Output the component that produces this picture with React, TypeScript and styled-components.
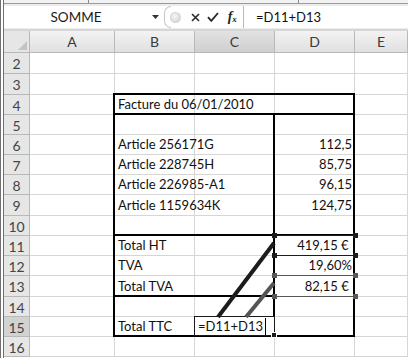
import styled, { createGlobalStyle } from "styled-components";

const GlobalStyle = createGlobalStyle`
  html, body {
    margin: 0;
    padding: 0;
    background: #fff;
  }
  body {
    font-family: "Lato", "Liberation Sans", sans-serif;
    overflow: hidden;
  }
`;

type Edges = { t?: boolean; r?: boolean; b?: boolean; l?: boolean };
type CellSpec = {
  text?: string;
  align?: "left" | "right";
  edges?: Edges;
  ref?: "dark" | "gray";
  active?: boolean;
};

const columns = [
  { key: "A", width: 85 },
  { key: "B", width: 80 },
  { key: "C", width: 80 },
  { key: "D", width: 80 },
  { key: "E", width: 53 },
];

const rows = [
  { n: 2, h: 21 },
  { n: 3, h: 21 },
  { n: 4, h: 20 },
  { n: 5, h: 20 },
  { n: 6, h: 20 },
  { n: 7, h: 20 },
  { n: 8, h: 20 },
  { n: 9, h: 21 },
  { n: 10, h: 20 },
  { n: 11, h: 20 },
  { n: 12, h: 20 },
  { n: 13, h: 21 },
  { n: 14, h: 20 },
  { n: 15, h: 20 },
  { n: 16, h: 20 },
];

const cells: Record<string, CellSpec> = {
  B4: { text: "Facture du 06/01/2010", edges: { t: true, l: true, b: true } },
  C4: { edges: { t: true, b: true } },
  D4: { edges: { t: true, r: true, b: true } },
  B6: { text: "Article 256171G" },
  D6: { text: "112,5", align: "right" },
  B7: { text: "Article 228745H" },
  D7: { text: "85,75", align: "right" },
  B8: { text: "Article 226985-A1" },
  D8: { text: "96,15", align: "right" },
  B9: { text: "Article 1159634K" },
  D9: { text: "124,75", align: "right" },
  B10: { edges: { b: true } },
  C10: { edges: { b: true } },
  D10: { edges: { b: true } },
  B11: { text: "Total HT" },
  D11: { text: "419,15 € ", align: "right", ref: "dark" },
  B12: { text: "TVA" },
  D12: { text: "19,60%", align: "right" },
  B13: { text: "Total TVA", edges: { b: true } },
  C13: { edges: { b: true } },
  D13: { text: "82,15 € ", align: "right", ref: "gray" },
  B15: { text: "Total TTC", edges: { b: true } },
  C15: { text: "=D11+D13", active: true, edges: { b: true } },
  D15: { edges: { b: true } },
};

// bordure gauche de B et bordures gauche/droite de D sur le tableau
for (let n = 5; n <= 15; n++) {
  const b = (cells[`B${n}`] = cells[`B${n}`] || {});
  b.edges = { ...b.edges, l: true };
  const d = (cells[`D${n}`] = cells[`D${n}`] || {});
  d.edges = { ...d.edges, r: true, l: n < 15 };
}

const refColor = { dark: "#1c1c1c", gray: "#575757" };

export default function App() {
  return (
    <Window>
      <GlobalStyle />
      <RibbonEdge>
        <RibbonSep style={{ left: 84 }} />
        <RibbonSep style={{ left: 294 }} />
      </RibbonEdge>

      <FormulaBar>
        <NameBox>SOMME</NameBox>
        <DropArrow>
          <svg width="7" height="4" viewBox="0 0 7 4">
            <path d="M0 0h7L3.5 4z" fill="#333" />
          </svg>
        </DropArrow>
        <ButtonGroup>
          <RoundCap />
          <Dot />
          <BarIcon>
            <svg width="9" height="9" viewBox="0 0 9 9">
              <path d="M1 1l7 7M8 1L1 8" stroke="#2a2a2a" strokeWidth="1.6" />
            </svg>
          </BarIcon>
          <BarIcon>
            <svg width="12" height="10" viewBox="0 0 12 10">
              <path
                d="M1 5.2l3.3 3.6L11 1"
                fill="none"
                stroke="#2a2a2a"
                strokeWidth="1.9"
              />
            </svg>
          </BarIcon>
          <FxIcon>
            f<sub>x</sub>
          </FxIcon>
        </ButtonGroup>
        <FormulaInput>=D11+D13</FormulaInput>
      </FormulaBar>

      <Sheet>
        <CornerCell>
          <svg width="9" height="9" viewBox="0 0 9 9">
            <path d="M9 0v9H0z" fill="#c4c4c4" />
          </svg>
        </CornerCell>
        {columns.map((c) => (
          <ColHeader key={c.key} $selected={c.key === "C"}>
            {c.key}
          </ColHeader>
        ))}

        {rows.map((r) => (
          <Row key={r.n} r={r} />
        ))}

        <Arrows width="408" height="358" viewBox="0 0 408 358">
          <line
            x1="218"
            y1="317"
            x2="274"
            y2="243"
            stroke="#1c1c1c"
            strokeWidth="4"
          />
          <line
            x1="246"
            y1="317"
            x2="274"
            y2="283"
            stroke="#555"
            strokeWidth="4"
          />
        </Arrows>
      </Sheet>
    </Window>
  );
}

function Row({ r }: { r: { n: number; h: number } }) {
  return (
    <>
      <RowHeader $h={r.h} $selected={r.n === 15}>
        {r.n}
      </RowHeader>
      {columns.map((c) => {
        const spec = cells[`${c.key}${r.n}`] || {};
        const e = spec.edges || {};
        const color = spec.ref ? refColor[spec.ref] : "";
        return (
          <Cell key={c.key} $h={r.h} $align={spec.align || "left"}>
            {spec.text && <CellText>{spec.text}</CellText>}
            {spec.active && <Caret />}
            {e.t && <Edge $side="t" />}
            {e.b && <Edge $side="b" />}
            {e.l && <Edge $side="l" />}
            {e.r && <Edge $side="r" />}
            {spec.ref && (
              <RefBox $color={color}>
                <Handle $color={color} $pos="tl" />
                <Handle $color={color} $pos="tr" />
                <Handle $color={color} $pos="bl" />
                <Handle $color={color} $pos="br" />
              </RefBox>
            )}
            {spec.active && (
              <ActiveBox>
                <FillHandle />
              </ActiveBox>
            )}
          </Cell>
        );
      })}
    </>
  );
}

const Window = styled.div`
  position: relative;
  width: 408px;
  height: 358px;
  overflow: hidden;
  box-sizing: border-box;
  border-left: 4px double #707070;
  background: #fff;
`;

const RibbonEdge = styled.div`
  position: relative;
  height: 3px;
  background: #f2f2f2;
  border-bottom: 1px solid #9a9a9a;
`;

const RibbonSep = styled.div`
  position: absolute;
  top: 0;
  width: 1px;
  height: 3px;
  background: #8a8a8a;
`;

const FormulaBar = styled.div`
  display: flex;
  align-items: stretch;
  height: 22px;
  padding: 2px 0 1px;
  background: #ececec;
  border-bottom: 2px solid #d6d6d6;
`;

const NameBox = styled.div`
  width: 144px;
  display: flex;
  align-items: center;
  justify-content: center;
  background: #fff;
  color: #1a1a1a;
  font-size: 13.5px;
`;

const DropArrow = styled.div`
  width: 14px;
  display: flex;
  align-items: center;
  justify-content: center;
  background: #fff;
`;

const ButtonGroup = styled.div`
  display: flex;
  align-items: center;
  width: 81px;
  background: #fff;
  border-right: 1px solid #b9b9b9;
`;

const RoundCap = styled.div`
  width: 6px;
  height: 20px;
  margin-left: 2px;
  border: 1px solid #c6c6c6;
  border-right: none;
  border-radius: 10px 0 0 10px;
`;

const Dot = styled.div`
  width: 9px;
  height: 9px;
  margin-left: -1px;
  margin-right: 6px;
  border-radius: 50%;
  background: radial-gradient(circle at 40% 35%, #f6f6f6, #cfcfcf);
  border: 1px solid #d4d4d4;
`;

const BarIcon = styled.div`
  width: 18px;
  display: flex;
  align-items: center;
  justify-content: center;
`;

const FxIcon = styled.div`
  width: 22px;
  text-align: center;
  font-family: "Liberation Serif", serif;
  font-style: italic;
  font-weight: bold;
  font-size: 14px;
  color: #222;
  line-height: 1;

  sub {
    font-size: 9px;
    vertical-align: -1px;
  }
`;

const FormulaInput = styled.div`
  flex: 1;
  display: flex;
  align-items: center;
  padding-left: 12px;
  background: #fff;
  color: #111;
  font-size: 13px;
`;

const Sheet = styled.div`
  display: grid;
  grid-template-columns: 26px 85px 80px 80px 80px 53px;
  grid-auto-rows: auto;
`;

const HeaderBase = styled.div`
  box-sizing: border-box;
  display: flex;
  align-items: center;
  justify-content: center;
  color: #3a3a3a;
  font-size: 14px;
  border-right: 1px solid #b8b8b8;
  border-bottom: 1px solid #b8b8b8;
`;

const CornerCell = styled(HeaderBase)`
  height: 22px;
  align-items: flex-end;
  justify-content: flex-end;
  padding: 0 2px 2px 0;
  background: #e6e6e6;
`;

const ColHeader = styled(HeaderBase)<{ $selected?: boolean }>`
  height: 22px;
  background: ${(p) =>
    p.$selected
      ? "linear-gradient(#e2e2e2, #cfcfcf)"
      : "linear-gradient(#f3f3f3, #e0e0e0)"};
`;

const RowHeader = styled(HeaderBase)<{ $h: number; $selected?: boolean }>`
  height: ${(p) => p.$h}px;
  padding-top: 1px;
  background: ${(p) => (p.$selected ? "#d2d2d2" : "#e6e6e6")};
  color: #444;
`;

const Cell = styled.div<{ $h: number; $align: "left" | "right" }>`
  position: relative;
  box-sizing: border-box;
  height: ${(p) => p.$h}px;
  display: flex;
  align-items: flex-end;
  justify-content: ${(p) => (p.$align === "right" ? "flex-end" : "flex-start")};
  padding: 0 2px 1px 3px;
  border-right: 1px solid #d6d6d6;
  border-bottom: 1px solid #d6d6d6;
  color: #111;
  font-size: 13px;
  white-space: pre;
  overflow: visible;
`;

const CellText = styled.span`
  position: relative;
  z-index: 2;
  line-height: 17px;
`;

const Caret = styled.span`
  position: relative;
  z-index: 2;
  width: 1px;
  height: 17px;
  margin-left: 2px;
  background: #000;
`;

const Edge = styled.span<{ $side: "t" | "r" | "b" | "l" }>`
  position: absolute;
  z-index: 3;
  background: #000;
  ${(p) =>
    p.$side === "t"
      ? "top: -2px; left: -2px; right: -1px; height: 2px;"
      : p.$side === "b"
      ? "bottom: -1px; left: -2px; right: -1px; height: 2px;"
      : p.$side === "l"
      ? "left: -2px; top: -2px; bottom: -1px; width: 2px;"
      : "right: -1px; top: -2px; bottom: -1px; width: 2px;"}
`;

const RefBox = styled.span<{ $color: string }>`
  position: absolute;
  z-index: 4;
  top: -1px;
  left: 0;
  right: -1px;
  bottom: -1px;
  border-top: 1px solid ${(p) => p.$color};
  border-bottom: 1px solid ${(p) => p.$color};
`;

const Handle = styled.span<{ $color: string; $pos: string }>`
  position: absolute;
  width: 5px;
  height: 5px;
  background: ${(p) => p.$color};
  ${(p) => (p.$pos[0] === "t" ? "top: -3px;" : "bottom: -3px;")}
  ${(p) => (p.$pos[1] === "l" ? "left: -3px;" : "right: -3px;")}
`;

const ActiveBox = styled.span`
  position: absolute;
  z-index: 4;
  top: -1px;
  left: -1px;
  right: -1px;
  bottom: 0;
  border: 1px solid #1a1a1a;
`;

const FillHandle = styled.span`
  position: absolute;
  right: -3px;
  bottom: -3px;
  width: 4px;
  height: 4px;
  background: #1a1a1a;
  border: 1px solid #fff;
`;

const Arrows = styled.svg`
  position: absolute;
  z-index: 5;
  left: -4px;
  top: 0;
  pointer-events: none;
`;
